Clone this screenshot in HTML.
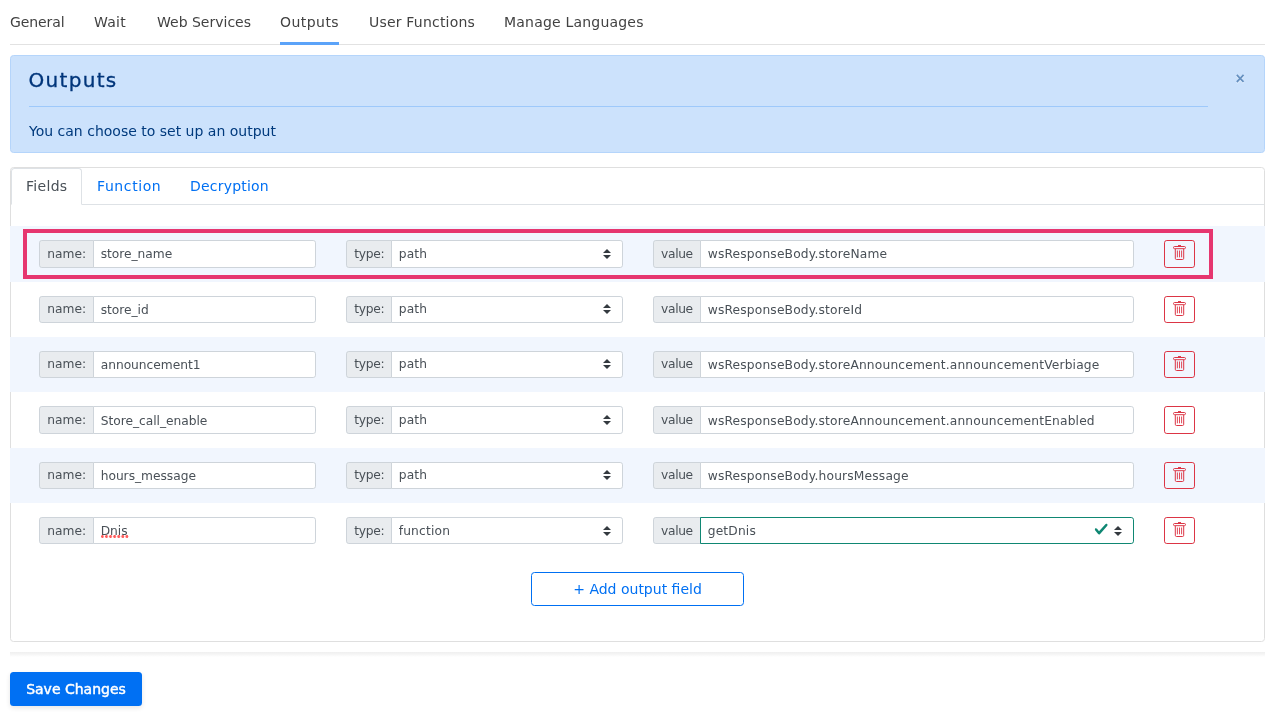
<!DOCTYPE html>
<html lang="en">
<head>
<meta charset="utf-8">
<title>Outputs</title>
<style>
*{box-sizing:border-box}
html,body{margin:0;padding:0;background:#fff}
body{width:1275px;height:712px;overflow:hidden;position:relative;will-change:transform;font-family:"DejaVu Sans","Liberation Sans",sans-serif;font-size:14px;line-height:21px;color:#212529}
/* top nav */
.topnav{position:absolute;left:10px;top:0;width:1255px;height:45px;border-bottom:1px solid #e2e2e2}
.topnav a{position:absolute;top:12px;height:33px;line-height:21px;color:#424242;white-space:nowrap;text-decoration:none}
.topnav a.active{border-bottom:3px solid #5ba3f9}
/* alert */
.alert{position:absolute;left:10px;top:55px;width:1255px;height:98px;background:#cce2fc;border:1px solid #b5d5fb;border-radius:3.5px;color:#003a7d;padding:0 57px 0 18px}
.alert h4{margin:0;position:absolute;left:17.5px;top:11.5px;letter-spacing:1.3px;font-size:20px;line-height:25px;font-weight:500;color:#00357a;-webkit-text-stroke:.3px #00357a}
.alert hr{position:absolute;left:18px;top:50px;width:1179px;height:1px;margin:0;border:0;background:#9ec9fb}
.alert p{margin:0;position:absolute;left:18px;top:65px;line-height:21px;white-space:nowrap}
.alert .close{position:absolute;left:1224.6px;top:11.6px;text-shadow:0 1px 0 #fff;font-size:16px;line-height:21px;font-weight:700;color:#004085;opacity:.5;font-family:"Liberation Sans",sans-serif}
/* card */
.card{position:absolute;left:10px;top:167px;width:1255px;height:475px;border:1px solid #dfdfdf;border-radius:3.5px;background:#fff}
.tabs{position:absolute;left:0;top:0;width:1253px;height:37px;border-bottom:1px solid #dee2e6}
.tabs a{position:absolute;top:0;height:37px;padding:8px 0 0 15px;text-align:left;color:#0070f3;white-space:nowrap;text-decoration:none;line-height:21px}
.tabs a.active{color:#495057;background:#fff;border:1px solid #dee2e6;border-bottom-color:#fff;border-radius:3.5px 3.5px 0 0;height:37px;top:0;left:0;padding:7px 0 0 14px}
/* rows */
.row{position:absolute;left:10px;width:1255px}
.row.odd{background:#f1f6fe}
.grp{position:absolute;top:14px;height:27px;font-size:12.25px;line-height:18.375px;color:#495057}
.addon{position:absolute;left:0;top:0;height:100%;background:#e9ecef;border:1px solid #ced4da;border-radius:2.8px 0 0 2.8px;padding:3.5px 0 0 7px;white-space:nowrap}
.ctl{letter-spacing:.17px;position:absolute;top:0;right:0;height:100%;background:#fff;border:1px solid #ced4da;border-radius:0 2.8px 2.8px 0;padding:3.5px 0 0 7px;white-space:nowrap;overflow:hidden}
.row.hi .addon,.row.hi .ctl.sel{padding-top:2.5px}
.ctl.lo{padding-top:4.5px}
.row.hi .ctl.lo{padding-top:3.5px}
.g1{left:29.3px;width:276.25px}
.g2{left:336.3px;width:276.25px}
.g3{left:643.3px;width:480.4px}
.g1 .addon{width:54.4px}.g1 .ctl{left:53.4px;letter-spacing:-.03px}
.g2 .addon{width:45.4px;letter-spacing:-.3px}.g2 .ctl{left:44.4px}
.g3 .addon{width:47.4px;letter-spacing:-.35px;padding-left:6.8px}.g3 .ctl{left:46.4px}
.sel svg.arr{position:absolute;right:10.5px;top:7.7px;width:8px;height:10px}
.row.hi .sel svg.arr{top:7px}
.ctl.valid{border-color:#0f8773}
.ctl.valid svg.chk{position:absolute;right:24.5px;top:4.4px;width:14.4px;height:14.4px}
.row.t .grp,.row.t .del{height:28px}
.del{position:absolute;left:1153.7px;top:14px;width:31.4px;height:27px;border:1px solid #dc3545;border-radius:2.8px}
.del svg{position:absolute;left:8.3px;top:4px;width:13px;height:15px}
.hl{position:absolute;left:23px;top:229px;width:1190px;height:50px;border:4px solid #e6366f}
.addbtn{position:absolute;left:531px;top:572px;width:213px;height:33.6px;border:1px solid #0070f3;border-radius:3.5px;color:#0070f3;text-align:center;line-height:21px;padding-top:6px;white-space:nowrap}
.hr2{position:absolute;left:10px;top:652px;width:1255px;height:5px;background:linear-gradient(#efefef,#f6f6f6 50%,#fff)}
.save{position:absolute;left:10px;top:672px;width:132px;height:34px;border-radius:3.5px;background:#0070f3;color:#fff;text-align:center;line-height:21px;padding-top:7.4px;white-space:nowrap;box-shadow:0 2px 5px rgba(0,0,0,.1);-webkit-text-stroke:.45px #fff}
.sq{position:relative;display:inline-block}
.sq::after{content:"";position:absolute;left:0;top:13.5px;width:28.5px;height:3px;background-image:radial-gradient(circle at 1.4px 1.5px,#ff5c5c 1.15px,rgba(255,92,92,0) 1.65px);background-size:4.09px 3px;background-repeat:repeat-x}
</style>
</head>
<body>
<div class="topnav">
  <a style="left:0;letter-spacing:-.1px">General</a>
  <a style="left:84px;letter-spacing:.25px">Wait</a>
  <a style="left:147px">Web Services</a>
  <a class="active" style="left:270px;width:59px;letter-spacing:.45px">Outputs</a>
  <a style="left:359px;letter-spacing:.2px">User Functions</a>
  <a style="left:494px;letter-spacing:.2px">Manage Languages</a>
</div>

<div class="alert">
  <h4>Outputs</h4>
  <hr>
  <p>You can choose to set up an output</p>
  <span class="close">×</span>
</div>

<div class="card">
  <div class="tabs">
    <a class="active" style="width:71px;letter-spacing:.3px">Fields</a>
    <a style="left:71px;width:94px;letter-spacing:.6px">Function</a>
    <a style="left:164px;width:108px;letter-spacing:.2px">Decryption</a>
  </div>
</div>

<div class="row odd t" style="top:226px;height:56px">
  <div class="grp g1"><div class="addon">name:</div><div class="ctl">store_name</div></div>
  <div class="grp g2"><div class="addon">type:</div><div class="ctl sel">path<svg class="arr" viewBox="0 0 4 5"><path fill="#343a40" d="M2 0L0 2h4zm0 5L0 3h4z"/></svg></div></div>
  <div class="grp g3"><div class="addon">value</div><div class="ctl">wsResponseBody.storeName</div></div>
  <div class="del"><svg viewBox="0 0 13 15" fill="none" stroke="#dc3545" stroke-width="1"><path d="M5 .7h3" stroke-width="1.3"/><rect x=".5" y="1.5" width="12" height="2.2" rx="1.1"/><path d="M2.3 4v9.3a1.2 1.2 0 0 0 1.2 1.2h6a1.2 1.2 0 0 0 1.2-1.2V4"/><path d="M4.4 5.5v6.8M6.5 5.5v6.8M8.6 5.5v6.8" stroke-width=".9"/></svg></div>
</div>
<div class="row hi" style="top:282px;height:55px">
  <div class="grp g1"><div class="addon">name:</div><div class="ctl lo">store_id</div></div>
  <div class="grp g2"><div class="addon">type:</div><div class="ctl sel">path<svg class="arr" viewBox="0 0 4 5"><path fill="#343a40" d="M2 0L0 2h4zm0 5L0 3h4z"/></svg></div></div>
  <div class="grp g3"><div class="addon">value</div><div class="ctl lo">wsResponseBody.storeId</div></div>
  <div class="del"><svg viewBox="0 0 13 15" fill="none" stroke="#dc3545" stroke-width="1"><path d="M5 .7h3" stroke-width="1.3"/><rect x=".5" y="1.5" width="12" height="2.2" rx="1.1"/><path d="M2.3 4v9.3a1.2 1.2 0 0 0 1.2 1.2h6a1.2 1.2 0 0 0 1.2-1.2V4"/><path d="M4.4 5.5v6.8M6.5 5.5v6.8M8.6 5.5v6.8" stroke-width=".9"/></svg></div>
</div>
<div class="row odd hi" style="top:337px;height:55px">
  <div class="grp g1"><div class="addon">name:</div><div class="ctl lo">announcement1</div></div>
  <div class="grp g2"><div class="addon">type:</div><div class="ctl sel">path<svg class="arr" viewBox="0 0 4 5"><path fill="#343a40" d="M2 0L0 2h4zm0 5L0 3h4z"/></svg></div></div>
  <div class="grp g3"><div class="addon">value</div><div class="ctl lo">wsResponseBody.storeAnnouncement.announcementVerbiage</div></div>
  <div class="del"><svg viewBox="0 0 13 15" fill="none" stroke="#dc3545" stroke-width="1"><path d="M5 .7h3" stroke-width="1.3"/><rect x=".5" y="1.5" width="12" height="2.2" rx="1.1"/><path d="M2.3 4v9.3a1.2 1.2 0 0 0 1.2 1.2h6a1.2 1.2 0 0 0 1.2-1.2V4"/><path d="M4.4 5.5v6.8M6.5 5.5v6.8M8.6 5.5v6.8" stroke-width=".9"/></svg></div>
</div>
<div class="row t" style="top:392px;height:56px">
  <div class="grp g1"><div class="addon">name:</div><div class="ctl lo">Store_call_enable</div></div>
  <div class="grp g2"><div class="addon">type:</div><div class="ctl sel">path<svg class="arr" viewBox="0 0 4 5"><path fill="#343a40" d="M2 0L0 2h4zm0 5L0 3h4z"/></svg></div></div>
  <div class="grp g3"><div class="addon">value</div><div class="ctl lo">wsResponseBody.storeAnnouncement.announcementEnabled</div></div>
  <div class="del"><svg viewBox="0 0 13 15" fill="none" stroke="#dc3545" stroke-width="1"><path d="M5 .7h3" stroke-width="1.3"/><rect x=".5" y="1.5" width="12" height="2.2" rx="1.1"/><path d="M2.3 4v9.3a1.2 1.2 0 0 0 1.2 1.2h6a1.2 1.2 0 0 0 1.2-1.2V4"/><path d="M4.4 5.5v6.8M6.5 5.5v6.8M8.6 5.5v6.8" stroke-width=".9"/></svg></div>
</div>
<div class="row odd hi" style="top:448px;height:55px">
  <div class="grp g1"><div class="addon">name:</div><div class="ctl lo">hours_message</div></div>
  <div class="grp g2"><div class="addon">type:</div><div class="ctl sel">path<svg class="arr" viewBox="0 0 4 5"><path fill="#343a40" d="M2 0L0 2h4zm0 5L0 3h4z"/></svg></div></div>
  <div class="grp g3"><div class="addon">value</div><div class="ctl lo">wsResponseBody.hoursMessage</div></div>
  <div class="del"><svg viewBox="0 0 13 15" fill="none" stroke="#dc3545" stroke-width="1"><path d="M5 .7h3" stroke-width="1.3"/><rect x=".5" y="1.5" width="12" height="2.2" rx="1.1"/><path d="M2.3 4v9.3a1.2 1.2 0 0 0 1.2 1.2h6a1.2 1.2 0 0 0 1.2-1.2V4"/><path d="M4.4 5.5v6.8M6.5 5.5v6.8M8.6 5.5v6.8" stroke-width=".9"/></svg></div>
</div>
<div class="row" style="top:503px;height:56px">
  <div class="grp g1"><div class="addon">name:</div><div class="ctl"><span class="sq">Dnis</span></div></div>
  <div class="grp g2"><div class="addon">type:</div><div class="ctl sel">function<svg class="arr" viewBox="0 0 4 5"><path fill="#343a40" d="M2 0L0 2h4zm0 5L0 3h4z"/></svg></div></div>
  <div class="grp g3"><div class="addon">value</div><div class="ctl sel valid">getDnis<svg class="chk" viewBox="0 0 8 8"><path fill="#0f8773" d="M2.3 6.73L.6 4.53c-.4-1.04.46-1.4 1.1-.8l1.1 1.4 3.4-3.8c.6-.63 1.6-.27 1.2.7l-4 4.6c-.43.5-.8.4-1.1.1z"/></svg><svg class="arr" viewBox="0 0 4 5"><path fill="#343a40" d="M2 0L0 2h4zm0 5L0 3h4z"/></svg></div></div>
  <div class="del"><svg viewBox="0 0 13 15" fill="none" stroke="#dc3545" stroke-width="1"><path d="M5 .7h3" stroke-width="1.3"/><rect x=".5" y="1.5" width="12" height="2.2" rx="1.1"/><path d="M2.3 4v9.3a1.2 1.2 0 0 0 1.2 1.2h6a1.2 1.2 0 0 0 1.2-1.2V4"/><path d="M4.4 5.5v6.8M6.5 5.5v6.8M8.6 5.5v6.8" stroke-width=".9"/></svg></div>
</div>

<div class="hl"></div>
<div class="addbtn">+ Add output field</div>
<div class="hr2"></div>
<div class="save">Save Changes</div>
</body>
</html>
